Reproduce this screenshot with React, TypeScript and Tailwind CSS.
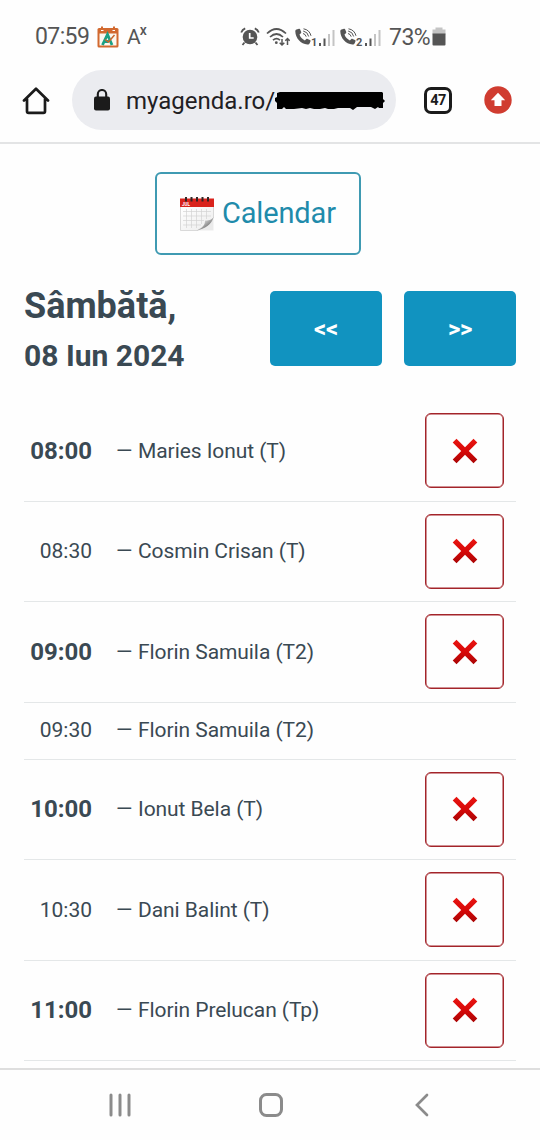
import type { ReactNode } from 'react';

type Slot = { time: string; name: string; cancel: boolean };

const SLOTS: Slot[] = [
  { time: '08:00', name: 'Maries Ionut (T)', cancel: true },
  { time: '08:30', name: 'Cosmin Crisan (T)', cancel: true },
  { time: '09:00', name: 'Florin Samuila (T2)', cancel: true },
  { time: '09:30', name: 'Florin Samuila (T2)', cancel: false },
  { time: '10:00', name: 'Ionut Bela (T)', cancel: true },
  { time: '10:30', name: 'Dani Balint (T)', cancel: true },
  { time: '11:00', name: 'Florin Prelucan (Tp)', cancel: true },
];

function AgendaAppIcon() {
  return (
    <svg width="22" height="22" viewBox="0 0 22 22">
      <rect x="0.5" y="2" width="21" height="19.5" rx="1.5" fill="#d2692f" />
      <rect x="2.5" y="7.5" width="17" height="12" fill="#fbf8f0" />
      <path d="M5 0.5v4M17 0.5v4" stroke="#d2692f" strokeWidth="2" />
      <path d="M4 4.5h2.5M15.5 4.5H18" stroke="#fff" strokeWidth="1" />
      <path d="M5.5 19L10.500 8.500l4.500 10.500M7.500 15.500h4" stroke="#1ba083" strokeWidth="2.800" fill="none" />
      <path d="M8 13.500l3.500 2.500L17.500 9" stroke="#c9662c" strokeWidth="1.500" fill="none" />
    </svg>
  );
}

function AlarmIcon() {
  return (
    <svg width="20" height="20" viewBox="0 0 20 20">
      <circle cx="10" cy="10" r="7.3" fill="#555" />
      <path d="M1.200 5.500Q2.300 2.500 5.200 1.300M18.800 5.500Q17.700 2.500 14.800 1.300" stroke="#555" strokeWidth="1.8" fill="none" />
      <path d="M4.500 15.500l-2 2.500M15.500 15.500l2 2.500" stroke="#555" strokeWidth="1.8" />
      <path d="M9.700 6v5h4" stroke="#fff" strokeWidth="1.7" fill="none" />
    </svg>
  );
}

function WifiIcon() {
  return (
    <svg width="24" height="20" viewBox="0 0 24 20" fill="none" stroke="#555">
      <path d="M1 6.500Q10.500 -2.500 20 6.500M4 10Q10.500 4 17 10M7 13.200q3.500-3 7 0" strokeWidth="1.7" />
      <circle cx="10.300" cy="15.700" r="1.400" fill="#555" stroke="none" />
      <path d="M16 12v6M13.700 15.700l2.300 2.300 2.300-2.300M21.500 18v-6.500M19.300 13.700l2.200-2.200 2.200 2.200" strokeWidth="1.5" />
    </svg>
  );
}

function CallIcon({ sim }: { sim: number }) {
  return (
    <div className="flex items-end">
      <svg width="17" height="18" viewBox="0 0 17 18" className="-translate-y-px">
        <path d="M1.500 1.500L4 .8c.6-.2 1 .1 1.200.6l1 2.700c.2.500 0 .9-.3 1.200L4.500 6.600c.9 2.700 2.700 4.700 5.400 5.900l1.400-1.400c.4-.4.8-.4 1.300-.2l2.400 1.200c.5.300.7.7.5 1.200l-.8 2c-.4 1-1.300 1.300-2.300 1.200C5.700 16 .6 10.200.3 3.500c0-1 .3-1.700 1.200-2z" fill="#555" />
        <path d="M8 5.500q2.500.5 3.200 3.200M8.200 3q4.500.8 5.500 5.500M8.500.8q6 1 7.500 7" stroke="#555" strokeWidth="1" fill="none" />
      </svg>
      <span className="-ml-px h-[10px] text-[11px] leading-[11px] font-bold">{sim}</span>
    </div>
  );
}

function SignalBars() {
  return (
    <svg width="16" height="17" viewBox="0 0 16 17" className="-translate-y-px">
      <rect x="0" y="14" width="2" height="3" fill="#555" />
      <rect x="4.500" y="9.500" width="2" height="7.500" fill="#555" />
      <rect x="9" y="5" width="2" height="12" fill="#c4c4c4" />
      <rect x="13.500" y="1" width="2" height="16" fill="#c4c4c4" />
    </svg>
  );
}

function StatusBar() {
  return (
    <div className="flex h-[60px] items-center pt-[13px] pl-[35px] text-[#555]">
      <div className="flex h-[24px] w-[205px] items-center">
        <span className="w-[62px] text-[23px] leading-6 tracking-[-0.6px]">07:59</span>
        <AgendaAppIcon />
        <span className="ml-[8px] flex text-[21px] leading-6">
          A<sup className="top-0 -ml-px text-[14px] leading-[11px] font-medium">x</sup>
        </span>
      </div>
      <div className="flex h-[20px] items-end">
        <AlarmIcon />
        <div className="ml-[6px]"><WifiIcon /></div>
        <div className="ml-[5px] w-[24px]"><CallIcon sim={1} /></div>
        <SignalBars />
        <div className="ml-[5px] w-[24px]"><CallIcon sim={2} /></div>
        <div className="ml-[1px]"><SignalBars /></div>
        <span className="ml-[8px] w-[43px] text-[23px] leading-[18px] tracking-[-0.5px] whitespace-nowrap">73%</span>
        <svg width="14" height="19" viewBox="0 0 14 19" className="-translate-y-px">
          <path d="M3.500 0.500h7v2H13.500v5H.5v-5h3z" fill="#c4c4c4" />
          <path d="M.5 6.500h13v11q0 1-1 1h-11q-1 0-1-1z" fill="#555" />
        </svg>
      </div>
    </div>
  );
}

// the black scribble that hides the end of the address
function Scribble() {
  return (
    <svg width="112" height="20" viewBox="0 0 112 20" className="-ml-px mt-[2px] shrink-0">
      <path d="M3 2L6 1H108L109 2V8L111 10L109 12V17H105L104 16L101 18L97 16H83L79 19L76 17H64L60 18H54L51 17L46 18H40L36 17L32 18L28 17L20 18H12L10 16L8 18H3V12L1 10V7L3 6z" fill="#000" />
    </svg>
  );
}

function BrowserBar() {
  return (
    <div className="flex h-[84px] items-start border-b-2 border-[#e3e4e5] pt-[10px]">
      <svg width="28" height="28" viewBox="0 0 28 28" className="mt-[17px] ml-[22px]" fill="none" stroke="#1b1b1b" strokeWidth="2.700" strokeLinejoin="round" strokeLinecap="round">
        <path d="M2 13.500L14 1.700l12 11.800M5 12v12.200q0 1.600 1.600 1.600h14.800q1.600 0 1.600-1.600V12" />
      </svg>
      <div className="ml-[22px] flex h-[60px] w-[324px] items-center rounded-full bg-[#ebecf0] pl-[22px]">
        <svg width="16" height="22" viewBox="0 0 16 22">
          <rect x="0" y="7.500" width="16" height="14" rx="2" fill="#1b1b1b" />
          <path d="M3.800 8V5.200a4.200 4.200 0 0 1 8.400 0V8" fill="none" stroke="#1b1b1b" strokeWidth="2.100" />
        </svg>
        <span className="ml-[16px] pt-px text-[24px] leading-[30px] text-[#1f2023]">myagenda.ro/</span>
        <Scribble />
      </div>
      <div className="mt-[17px] ml-[28px] flex h-[27px] w-[28px] items-center justify-center rounded-[7px] border-[3px] border-[#1b1b1b] pt-[2px] text-[14.500px] leading-none font-bold tracking-[-0.6px] text-[#1b1b1b]">
        47
      </div>
      <svg width="28" height="28" viewBox="0 0 28 28" className="mt-[16px] ml-[32px]">
        <circle cx="14" cy="14" r="13.700" fill="#d03c30" />
        <path d="M14 6.700l7.200 7.500h-3.700v5.800h-7v-5.800H6.800z" fill="#fff" />
      </svg>
    </div>
  );
}

function CalendarEmoji() {
  return (
    <svg width="34" height="34" viewBox="0 0 34 34">
      <defs>
        <linearGradient id="page" x1="0" y1="0" x2="1" y2="1">
          <stop offset="0" stopColor="#fff" />
          <stop offset="1" stopColor="#ececec" />
        </linearGradient>
        <linearGradient id="curl" x1="0" y1="0" x2="1" y2="1">
          <stop offset="0.2" stopColor="#fafafa" />
          <stop offset="0.7" stopColor="#777" />
        </linearGradient>
      </defs>
      <path d="M.5 9.500h33V21L18 33.500H.5z" fill="url(#page)" stroke="#ccc" strokeWidth="0.7" />
      <path d="M33.500 21v12.500H17z" fill="#ebebeb" />
      <path d="M3 14.500h28M3 19h28M3 23.500h21M3 28h18M6.500 12v19M11.500 12v19M16.500 12v19M21.500 12v15M26.500 12v10" stroke="#d3d3d3" strokeWidth="0.7" />
      <path d="M33.500 20.500C30 24.500 26 23 25 23.500c.3 4.500-2.500 7.500-8.500 10C25 32 31.500 27.500 33.500 20.500z" fill="url(#curl)" />
      <rect x="0" y="1.500" width="34" height="8.500" fill="#d9231c" />
      <text x="2" y="8.700" fontSize="4.500" fontWeight="700" fill="#fff" className="font-['Roboto']">JUL</text>
      <path d="M6 0v4.500M11.500 0v4.500M17 0v4.500M22.500 0v4.500M28 0v4.500" stroke="#332524" strokeWidth="2" />
    </svg>
  );
}

function NavButton({ children }: { children: ReactNode }) {
  return (
    <button className="flex h-[75px] w-[112px] items-center justify-center rounded-[5px] bg-[#1193c0] pt-px text-[24px] font-bold tracking-[-0.3px] text-white">
      {children}
    </button>
  );
}

function CancelButton() {
  return (
    <button className="flex h-[75px] w-[79px] items-center justify-center rounded-[6px] border border-[#a3242a] shadow-[inset_0_0_0_0.500px_#a3242a]">
      <svg width="26" height="26" viewBox="0 0 26 26">
        <defs>
          <linearGradient id="cross" x1="0" y1="0" x2="0" y2="1">
            <stop offset="0" stopColor="#e81612" />
            <stop offset="0.500" stopColor="#d80808" />
            <stop offset="1" stopColor="#a80505" />
          </linearGradient>
        </defs>
        <path d="M4.500 .7L13 9.200l8.500-8.500 3.800 3.800L16.800 13l8.500 8.500-3.800 3.800L13 16.800l-8.500 8.500L.7 21.500 9.200 13 .7 4.500z" fill="url(#cross)" />
      </svg>
    </button>
  );
}

function SlotRow({ slot }: { slot: Slot }) {
  const fullHour = slot.time.endsWith(':00');
  return (
    <div className={`flex shrink-0 items-center border-b border-[#e4e7e8] pr-[12px] ${slot.cancel ? 'h-[100.5px]' : 'h-[57px]'}`}>
      <span className={`w-[68px] text-right ${fullHour ? 'text-[24px] font-bold' : 'pt-px text-[21px]'}`}>{slot.time}</span>
      <span className="ml-[24px] w-[22px] pt-px text-[21px] tracking-[-2px]">—</span>
      <span className="flex-1 pt-px text-[21px] tracking-[-0.07px] whitespace-nowrap">{slot.name}</span>
      {slot.cancel && <CancelButton />}
    </div>
  );
}

export default function App() {
  return (
    <div className="flex h-[1140px] w-[540px] flex-col overflow-hidden bg-[#fefefe] font-['Roboto',sans-serif] text-[#3a4953]">
      <StatusBar />
      <BrowserBar />
      <main className="flex min-h-0 flex-1 flex-col overflow-hidden px-[24px]">
        <button className="mt-[28px] ml-[131px] flex h-[83px] w-[206px] shrink-0 items-center rounded-[6px] border-2 border-[#3f9ab2] pl-[23px] text-[#1f8bab]">
          <CalendarEmoji />
          <span className="ml-[8px] text-[29px] tracking-[-0.15px]">Calendar</span>
        </button>
        <div className="mt-[36px] flex h-[110px] shrink-0 items-start justify-between">
          <h1 className="-mt-[10px] font-bold">
            <div className="text-[36px] leading-[50px]">Sâmbătă,</div>
            <div className="text-[30px] leading-[50px]">08 Iun 2024</div>
          </h1>
          <div className="flex gap-[22px]">
            <NavButton>&lt;&lt;</NavButton>
            <NavButton>&gt;&gt;</NavButton>
          </div>
        </div>
        {SLOTS.map(s => <SlotRow key={s.time} slot={s} />)}
      </main>
      <nav className="h-[72px] shrink-0 border-t-2 border-[#dedede] pt-[22px] pl-[108px]">
        <svg width="324" height="26" viewBox="0 0 324 26" fill="none" stroke="#8b8b8b" strokeWidth="3" strokeLinecap="round">
          <path d="M3 3v20M12 3v20M21 3v20" />
          <rect x="152.500" y="2.500" width="21" height="21" rx="6" />
          <path d="M319 3l-10 10 10 10" strokeWidth="2.700" />
        </svg>
      </nav>
    </div>
  );
}
